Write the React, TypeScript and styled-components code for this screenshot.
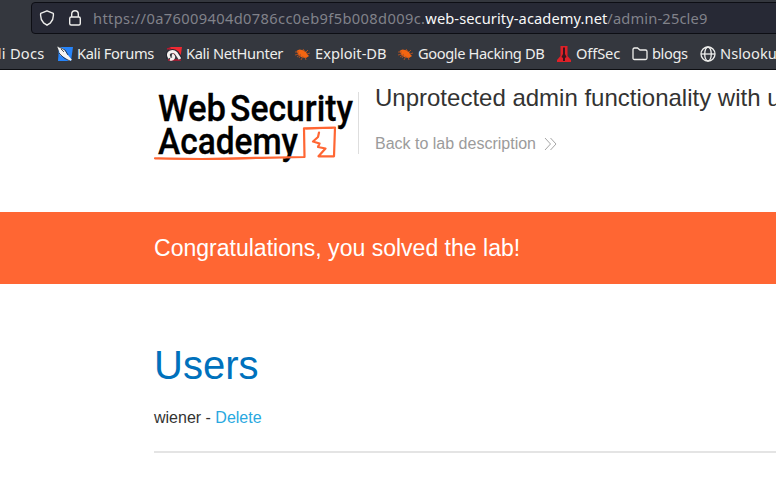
import React from "react";
import styled, { createGlobalStyle } from "styled-components";

const GlobalStyle = createGlobalStyle`
  *{box-sizing:border-box}
  body{margin:0;background:#fff;overflow:hidden;font-family:"Liberation Sans",Arial,sans-serif;color:#333332}
`;
const Page = styled.div`width:776px;height:499px;overflow:hidden;`;
const Chrome = styled.header`
  height:70px;background:#34373e;border-bottom:1px solid #0d0e12;padding-top:2px;
  font-family:"Noto Sans",sans-serif;color:#eeeeec;overflow:hidden;
`;
const UrlBar = styled.div`
  height:32px;margin-left:31px;width:780px;background:#272935;border:1px solid #0d0e14;border-radius:4px;
  display:flex;align-items:center;padding-left:7px;
`;
const BarIcon = styled.svg`width:16px;height:16px;flex:none;margin-right:12px;`;
const Url = styled.div`
  font-size:14.67px;line-height:20px;color:#81828a;white-space:nowrap;margin-left:-2px;letter-spacing:.36px;
`;
const Host = styled.span`color:#f8f8f8;letter-spacing:.08px;`;
const UrlPath = styled.span`letter-spacing:.15px;`;
const Bookmarks = styled.nav`
  display:flex;height:35px;align-items:center;padding-top:4px;margin-left:-20px;
`;
const Bookmark = styled.div<{ $w: number; $spacing: number }>`
  width:${p => p.$w}px;flex:none;display:flex;align-items:center;gap:4px;
  font-size:14.67px;line-height:20px;white-space:nowrap;letter-spacing:${p => p.$spacing}px;
`;
const Label = styled.span`height:20px;margin-top:-2px;`;
const Glyph = styled.svg`width:16px;height:16px;flex:none;`;
const LabHeader = styled.section`display:flex;height:142px;padding-left:154px;`;
const LogoCell = styled.div`width:205px;height:62px;margin-top:22px;border-right:1px solid #dedede;flex:none;`;
const Logo = styled.svg`display:block;width:204px;height:72px;overflow:visible;`;
const TitleCell = styled.div`padding:13px 0 0 16px;white-space:nowrap;`;
const Title = styled.h2`margin:0;font-size:24px;line-height:30px;font-weight:400;`;
const BackLink = styled.a`
  display:flex;align-items:center;margin-top:21px;font-size:16px;line-height:20px;color:#9b9b9b;
`;
const Chevrons = styled.svg`width:13px;height:14px;margin-left:8px;margin-top:-1px;`;
const Banner = styled.section`
  height:72px;padding-left:154px;background:#ff6633;color:#fff;font-size:23.04px;line-height:72px;
`;
const Main = styled.main`padding:57px 0 0 154px;`;
const Heading = styled.h1`margin:0;font-size:40px;line-height:48px;font-weight:400;color:#0071bc;`;
const UserRow = styled.div`margin-top:19px;font-size:16px;line-height:20px;`;
const Delete = styled.a`color:#29a8e0;`;
const Rule = styled.hr`border:0;height:2px;background:#e4e4e4;margin:23px 0 0;`;

const Forum = () => (
  <Glyph viewBox="0 0 16 16">
    <path d="M2 1H16L14 15H1Z" fill="#2684fa" />
    <path d="M0 0L7 3L10 8L15 14L12 15L7 11L3 9L2 5Z" fill="#f5f5f2" />
    <path d="M0 0L8 4L11 9M2 7L7 12L13 15M4 3l3 3" stroke="#252830" strokeWidth=".8" fill="none" />
  </Glyph>
);
const Hunter = () => (
  <Glyph viewBox="0 0 16 16">
    <path d="M4 1H16L14 14L10 9L3 5Z" fill="#ee2932" />
    <path d="M1 3L5 2M2 14H15" stroke="#b61931" strokeWidth="1.5" />
    <path d="M2 12C-1 6 7 3 11 7L15 13" fill="none" stroke="#242832" strokeWidth="4" />
    <path d="M3.5 12C-.5 6 7 4 10 7L14 13M4 13C8 14 9 10 6 9" fill="none" stroke="#f4f1ef" strokeWidth="2.9" />
  </Glyph>
);
const Bug = () => (
  <Glyph viewBox="0 0 16 16">
    <path d="M1.5 5Q4 2.5 7 4L9 4.5Q12 6 12 8L14 10L11 12Q7 12.5 3.5 9Z" fill="#f36511" />
    <path d="M0 6L4 6M2 11L6 8M0 9L4 8M6 14L8 10M8 3L10 6M11 6L13 4M12 8L15 7M10 11L11 14M4 12L6 9" stroke="#b85220" strokeWidth=".9" />
  </Glyph>
);
const OffSec = () => (
  <Glyph viewBox="0 0 16 16">
    <path d="M4.5 0H11.5V10L15 14V16H1V14L4.5 10Z" fill="#df2027" />
    <path d="M7 2L8 1L9 2V8L10.5 11L9 12V15H7V12L5.5 11L7 8Z" fill="#39161d" />
  </Glyph>
);
const Folder = () => (
  <Glyph viewBox="0 0 16 16" fill="none" stroke="#eeeeec" strokeWidth="1.3">
    <path d="M1 12V3.5Q1 2 2.5 2H5.5L8 4H13.5Q15 4 15 5.5V12Q15 13.5 13.5 13.5H2.5Q1 13.5 1 12Z" />
  </Glyph>
);
const Globe = () => (
  <Glyph viewBox="0 0 16 16" fill="none" stroke="#eeeeec" strokeWidth="1.3">
    <circle cx="8" cy="8" r="7" /><ellipse cx="8" cy="8" rx="3.3" ry="7" /><path d="M1 8H15" />
  </Glyph>
);

const bookmarks = [
  { label: "Kali Docs", width: 77, spacing: 0.25, icon: null },
  { label: "Kali Forums", width: 109, spacing: -0.37, icon: <Forum /> },
  { label: "Kali NetHunter", width: 129, spacing: -0.35, icon: <Hunter /> },
  { label: "Exploit-DB", width: 103, spacing: 0, icon: <Bug /> },
  { label: "Google Hacking DB", width: 158, spacing: -0.4, icon: <Bug /> },
  { label: "OffSec", width: 76, spacing: -0.12, icon: <OffSec /> },
  { label: "blogs", width: 68, spacing: -0.4, icon: <Folder /> },
  { label: "Nslookup", width: 100, spacing: 0.05, icon: <Globe /> },
];

export default function App() {
  return (
    <Page>
      <GlobalStyle />
      <Chrome>
        <UrlBar>
          <BarIcon viewBox="0 0 16 16" fill="none" stroke="#eeeeec" strokeWidth="1.4" strokeLinejoin="round">
            <path d="M8 .8L14.3 3.4Q15 8.8 11.5 12.8L8 15.2L4.5 12.8Q1 8.8 1.7 3.4Z" />
          </BarIcon>
          <BarIcon viewBox="0 0 16 16" fill="none" stroke="#eeeeec" strokeWidth="1.4">
            <rect x="2.7" y="7" width="10.6" height="8" rx="1.5" /><path d="M4.7 7V4Q4.7 .8 8 .8T11.3 4V7" />
          </BarIcon>
          <Url>https://0a76009404d0786cc0eb9f5b008d009c.<Host>web-security-academy.net</Host><UrlPath>/admin-25cle9</UrlPath></Url>
        </UrlBar>
        <Bookmarks>
          {bookmarks.map(b => (
            <Bookmark key={b.label} $w={b.width} $spacing={b.spacing}>{b.icon}<Label>{b.label}</Label></Bookmark>
          ))}
        </Bookmarks>
      </Chrome>
      <LabHeader>
        <LogoCell>
          <Logo viewBox="0 0 204 72">
            <g fontFamily="Roboto, sans-serif" fontWeight="500" fontSize="37.5" fill="#000" stroke="#000" strokeWidth=".3">
              <text x="4" y="29" textLength="68" lengthAdjust="spacingAndGlyphs">Web</text>
              <text x="76" y="29" textLength="123" lengthAdjust="spacingAndGlyphs">Security</text>
              <text x="4" y="61.5" textLength="140" lengthAdjust="spacingAndGlyphs">Academy</text>
            </g>
            <g fill="none" stroke="#ff6633" strokeLinecap="round" strokeLinejoin="round">
              <path d="M1 66.3L48 67L108 65.8L150.5 65L150 36.3L181 35.5L180 64.3H164.5L171.5 56.5L164 55L165.5 51.5L159 49.5L164 45L165 40.5" strokeWidth="2.2" />
              <path d="M4 66.4Q50 68.2 105 66.3M152 37L178 36.2" strokeWidth="1.2" />
            </g>
          </Logo>
        </LogoCell>
        <TitleCell>
          <Title>Unprotected admin functionality with unpredictable URL</Title>
          <BackLink>Back to lab description
            <Chevrons viewBox="0 0 13 14" fill="none" stroke="#9b9b9b" strokeWidth=".9"><path d="M1 1L6.5 7L1 13M6.5 1L12 7L6.5 13" /></Chevrons>
          </BackLink>
        </TitleCell>
      </LabHeader>
      <Banner>Congratulations, you solved the lab!</Banner>
      <Main>
        <Heading>Users</Heading>
        <UserRow>wiener - <Delete>Delete</Delete></UserRow>
        <Rule />
      </Main>
    </Page>
  );
}
